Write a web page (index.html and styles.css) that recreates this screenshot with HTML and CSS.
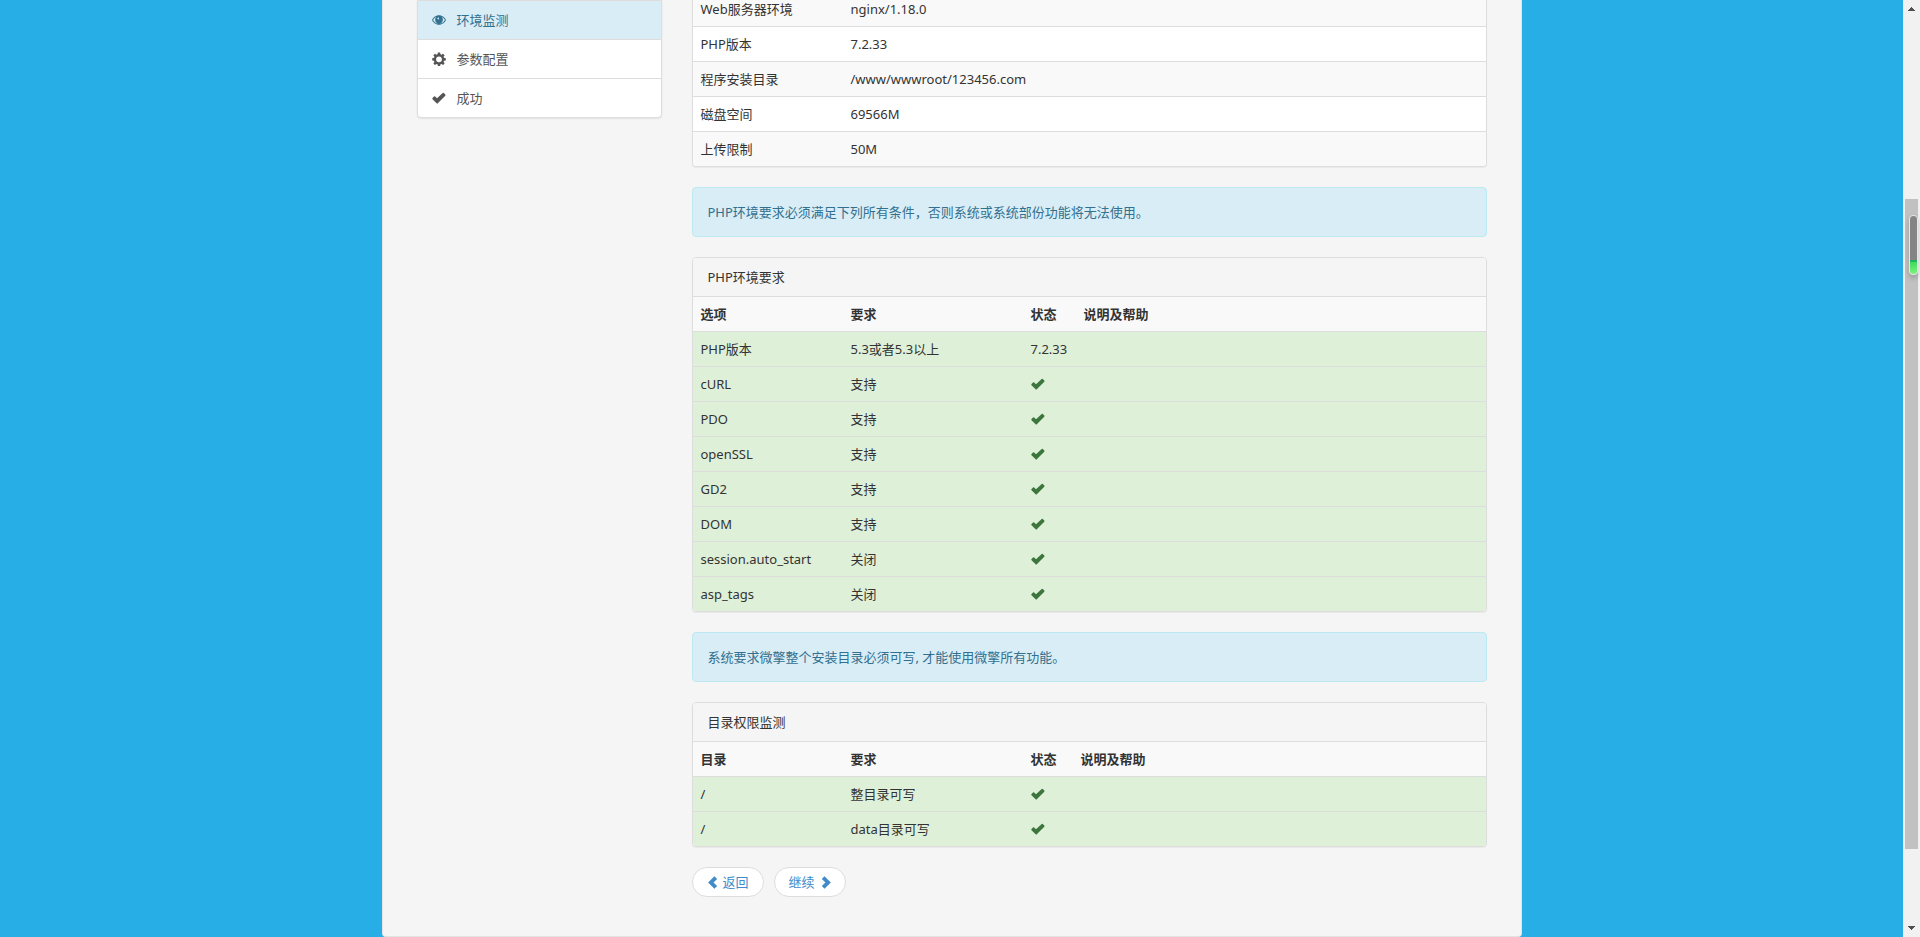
FILE: index.html
```html
<!DOCTYPE html>
<html lang="zh-CN">
<head>
  <meta charset="UTF-8">
  <title>安装系统 - 环境监测</title>
  <link rel="stylesheet" href="styles.css">
</head>
<body>
  <!-- Shared icons -->
  <svg class="icon-defs" aria-hidden="true">
    <symbol id="icon-ok" viewBox="0 0 14 14">
      <path d="M4.900 12.500 0.500 8.300Q0 7.700 0.500 7.100L2 5.600Q2.600 5.100 3.200 5.600L5 7.300 10.700 2Q11.300 1.500 11.800 2L13.300 3.500Q13.800 4.100 13.300 4.700L5.500 12.500Q5.200 12.800 4.900 12.500Z"/>
    </symbol>
    <symbol id="icon-eye" viewBox="0 0 14 14">
      <path fill-rule="evenodd" d="M7 2.200C3.600 2.200 1 4.800 0 7c1 2.200 3.600 4.800 7 4.800S13 9.200 14 7C13 4.800 10.400 2.200 7 2.200ZM4.200 4.100A4 4 0 0 0 4.500 9.800 A3.800 3.800 0 0 0 9.500 9.800 A4 4 0 0 0 9.800 4.100C11.200 4.700 12.200 5.800 12.900 7C11.800 9.100 9.600 10.800 7 10.800S2.200 9.100 1.100 7C1.800 5.800 2.800 4.700 4.200 4.100ZM6.600 4.300L7.200 6.500 5.200 5.900Q5.600 4.700 6.600 4.300Z"/>
    </symbol>
    <symbol id="icon-cog" viewBox="0 0 14 14">
      <path fill-rule="evenodd" d="M5.900 0.500h2.200l.4 1.800 1 .4 1.600-1 1.500 1.500-1 1.600.4 1 1.800.4v2.200l-1.800.4-.4 1 1 1.600-1.500 1.500-1.600-1-1 .4-.4 1.700H5.900l-.4-1.700-1-.4-1.600 1-1.500-1.500 1-1.600-.4-1-1.800-.4V6.200l1.800-.4.4-1-1-1.600 1.500-1.500 1.600 1 1-.4ZM7 4.400a2.900 2.900 0 1 0 0 5.800 2.900 2.900 0 1 0 0-5.800Z"/>
    </symbol>
    <symbol id="icon-left" viewBox="0 0 14 14">
      <path d="M8 0.300 10.900 3.100 7 7 10.900 10.900 8 13.700 1.200 7Z"/>
    </symbol>
    <symbol id="icon-right" viewBox="0 0 14 14">
      <path d="M7 0.300 4.100 3.100 8 7 4.100 10.900 7 13.700 13.800 7Z"/>
    </symbol>
  </svg>

  <div class="page">
    <div class="well">
      <nav class="steps">
        <a href="#env" class="step active"><svg class="icon"><use href="#icon-eye"/></svg>环境监测</a>
        <a href="#config" class="step"><svg class="icon"><use href="#icon-cog"/></svg>参数配置</a>
        <a href="#done" class="step"><svg class="icon"><use href="#icon-ok"/></svg>成功</a>
      </nav>

      <main class="content" id="env">
        <!-- Server information -->
        <div class="panel panel-server">
          <table class="table striped">
            <tr><td class="col-name">Web服务器环境</td><td>nginx/1.18.0</td></tr>
            <tr><td>PHP版本</td><td>7.2.33</td></tr>
            <tr><td>程序安装目录</td><td>/www/wwwroot/123456.com</td></tr>
            <tr><td>磁盘空间</td><td>69566M</td></tr>
            <tr><td>上传限制</td><td>50M</td></tr>
          </table>
        </div>

        <div class="alert">PHP环境要求必须满足下列所有条件，否则系统或系统部份功能将无法使用。</div>

        <!-- PHP requirements -->
        <div class="panel">
          <div class="panel-heading">PHP环境要求</div>
          <table class="table">
            <tr><th class="col-name">选项</th><th class="col-need">要求</th><th class="col-version">状态</th><th>说明及帮助</th></tr>
            <tr class="success"><td>PHP版本</td><td>5.3或者5.3以上</td><td>7.2.33</td><td></td></tr>
            <tr class="success"><td>cURL</td><td>支持</td><td><svg class="icon"><use href="#icon-ok"/></svg></td><td></td></tr>
            <tr class="success"><td>PDO</td><td>支持</td><td><svg class="icon"><use href="#icon-ok"/></svg></td><td></td></tr>
            <tr class="success"><td>openSSL</td><td>支持</td><td><svg class="icon"><use href="#icon-ok"/></svg></td><td></td></tr>
            <tr class="success"><td>GD2</td><td>支持</td><td><svg class="icon"><use href="#icon-ok"/></svg></td><td></td></tr>
            <tr class="success"><td>DOM</td><td>支持</td><td><svg class="icon"><use href="#icon-ok"/></svg></td><td></td></tr>
            <tr class="success"><td>session.auto_start</td><td>关闭</td><td><svg class="icon"><use href="#icon-ok"/></svg></td><td></td></tr>
            <tr class="success"><td>asp_tags</td><td>关闭</td><td><svg class="icon"><use href="#icon-ok"/></svg></td><td></td></tr>
          </table>
        </div>

        <div class="alert">系统要求微擎整个安装目录必须可写, 才能使用微擎所有功能。</div>

        <!-- Directory permissions -->
        <div class="panel">
          <div class="panel-heading">目录权限监测</div>
          <table class="table">
            <tr><th class="col-name">目录</th><th class="col-need">要求</th><th class="col-state">状态</th><th>说明及帮助</th></tr>
            <tr class="success"><td>/</td><td>整目录可写</td><td><svg class="icon"><use href="#icon-ok"/></svg></td><td></td></tr>
            <tr class="success"><td>/</td><td>data目录可写</td><td><svg class="icon"><use href="#icon-ok"/></svg></td><td></td></tr>
          </table>
        </div>

        <div class="pager">
          <a href="#back"><svg class="icon"><use href="#icon-left"/></svg>返回</a>
          <a href="#next">继续<svg class="icon"><use href="#icon-right"/></svg></a>
        </div>
      </main>
    </div>
  </div>

  <div class="scrollbar" aria-hidden="true">
    <svg class="arrow" viewBox="0 0 7 4"><path d="M3 0h1v1h1v1h1v1h1v1H0V3h1V2h1V1h1Z"/></svg>
    <div class="track"><div class="thumb"></div></div>
    <svg class="arrow" viewBox="0 0 7 4"><path d="M0 0h7v1H6v1H5v1H4v1H3V3H2V2H1V1H0Z"/></svg>
    <div class="meter"></div>
  </div>
</body>
</html>
```
FILE: styles.css
```css
* {
  box-sizing: border-box;
}

body {
  display: flex;
  margin: 0;
  min-height: 100vh;
  overflow: hidden;
  background-color: #28aee6;
  color: #333;
  font-family: "Noto Sans", "Noto Sans CJK SC", sans-serif;
  font-size: 13px;
  line-height: 18px;
}

a {
  color: #428bca;
  text-decoration: none;
}

.icon-defs {
  position: absolute;
  width: 0;
  height: 0;
}

.icon {
  width: 14px;
  height: 14px;
  fill: currentColor;
}

.page {
  flex: 1;
}

.well {
  display: grid;
  grid-template-columns: 245px 1fr;
  gap: 30px;
  align-items: start;
  max-width: 1140px;
  margin: 0 auto;
  padding: 0 34px 39px;
  background-color: #f5f5f5;
  border: 1px solid #e3e3e3;
  border-top: 0;
  border-radius: 0 0 4px 4px;
}

/* Install steps */
.steps {
  background-color: #fff;
  border: 1px solid #ddd;
  border-radius: 0 0 4px 4px;
  box-shadow: 0 1px 2px rgba(0, 0, 0, 0.075);
}

.step {
  display: flex;
  align-items: center;
  gap: 11px;
  padding: 10px 14px;
  color: #555;
}

.step + .step {
  border-top: 1px solid #ddd;
}

.step.active {
  background-color: #d9edf7;
  color: #31708f;
}

.content {
  margin-top: -9px;
}

.panel {
  margin-bottom: 20px;
  background-color: #fff;
  border: 1px solid #ddd;
  border-radius: 4px;
  box-shadow: 0 1px 1px rgba(0, 0, 0, 0.05);
  overflow: hidden;
}

.panel-server {
  border-top: 0;
}

.panel-heading {
  padding: 10px 15px;
  background-color: #f5f5f5;
}

.table {
  width: 100%;
  border-spacing: 0;
  table-layout: fixed;
}

.table th,
.table td {
  height: 35px;
  padding: 8px;
  border-top: 1px solid #ddd;
  text-align: left;
  vertical-align: top;
}

.table th,
.striped tr:nth-child(odd) td {
  background-color: #f9f9f9;
}

.table .success td {
  background-color: #dff0d8;
}

.table .icon {
  display: block;
  height: 18px;
  color: #3c763d;
}

.table .col-name {
  width: 150px;
}

.table .col-need {
  width: 180px;
}

.table .col-version {
  width: 53px;
}

.table .col-state {
  width: 50px;
}

.alert {
  margin-bottom: 20px;
  padding: 15px;
  background-color: #d9edf7;
  border: 1px solid #bce8f1;
  border-radius: 4px;
  color: #31708f;
}

.pager {
  display: flex;
  gap: 10px;
}

.pager a {
  display: flex;
  align-items: center;
  gap: 3px;
  padding: 5px 14px;
  background-color: #fff;
  border: 1px solid #ddd;
  border-radius: 15px;
}

.pager .icon {
  width: 13px;
  height: 13px;
}

/* Window scrollbar */
.scrollbar {
  position: relative;
  display: flex;
  flex-direction: column;
  align-items: center;
  width: 17px;
  height: 100vh;
  padding: 7px 0;
  background-color: #f1f1f1;
}

.arrow {
  width: 7px;
  height: 4px;
  fill: #505050;
}

.track {
  flex: 1;
  width: 13px;
  margin: 6px 0;
}

.thumb {
  height: 72%;
  margin-top: 182px;
  background-color: #c1c1c1;
}

.meter {
  position: absolute;
  top: 215px;
  right: 2px;
  width: 9px;
  height: 60px;
  background: linear-gradient(#858585 44px, #20b35b 44px, #20b35b 46px, #42d860 46px, #78f678);
  border: 1px solid #e6e6e6;
  border-radius: 4px;
  box-shadow: 0 3px 5px rgba(0, 0, 0, 0.2);
}
```
